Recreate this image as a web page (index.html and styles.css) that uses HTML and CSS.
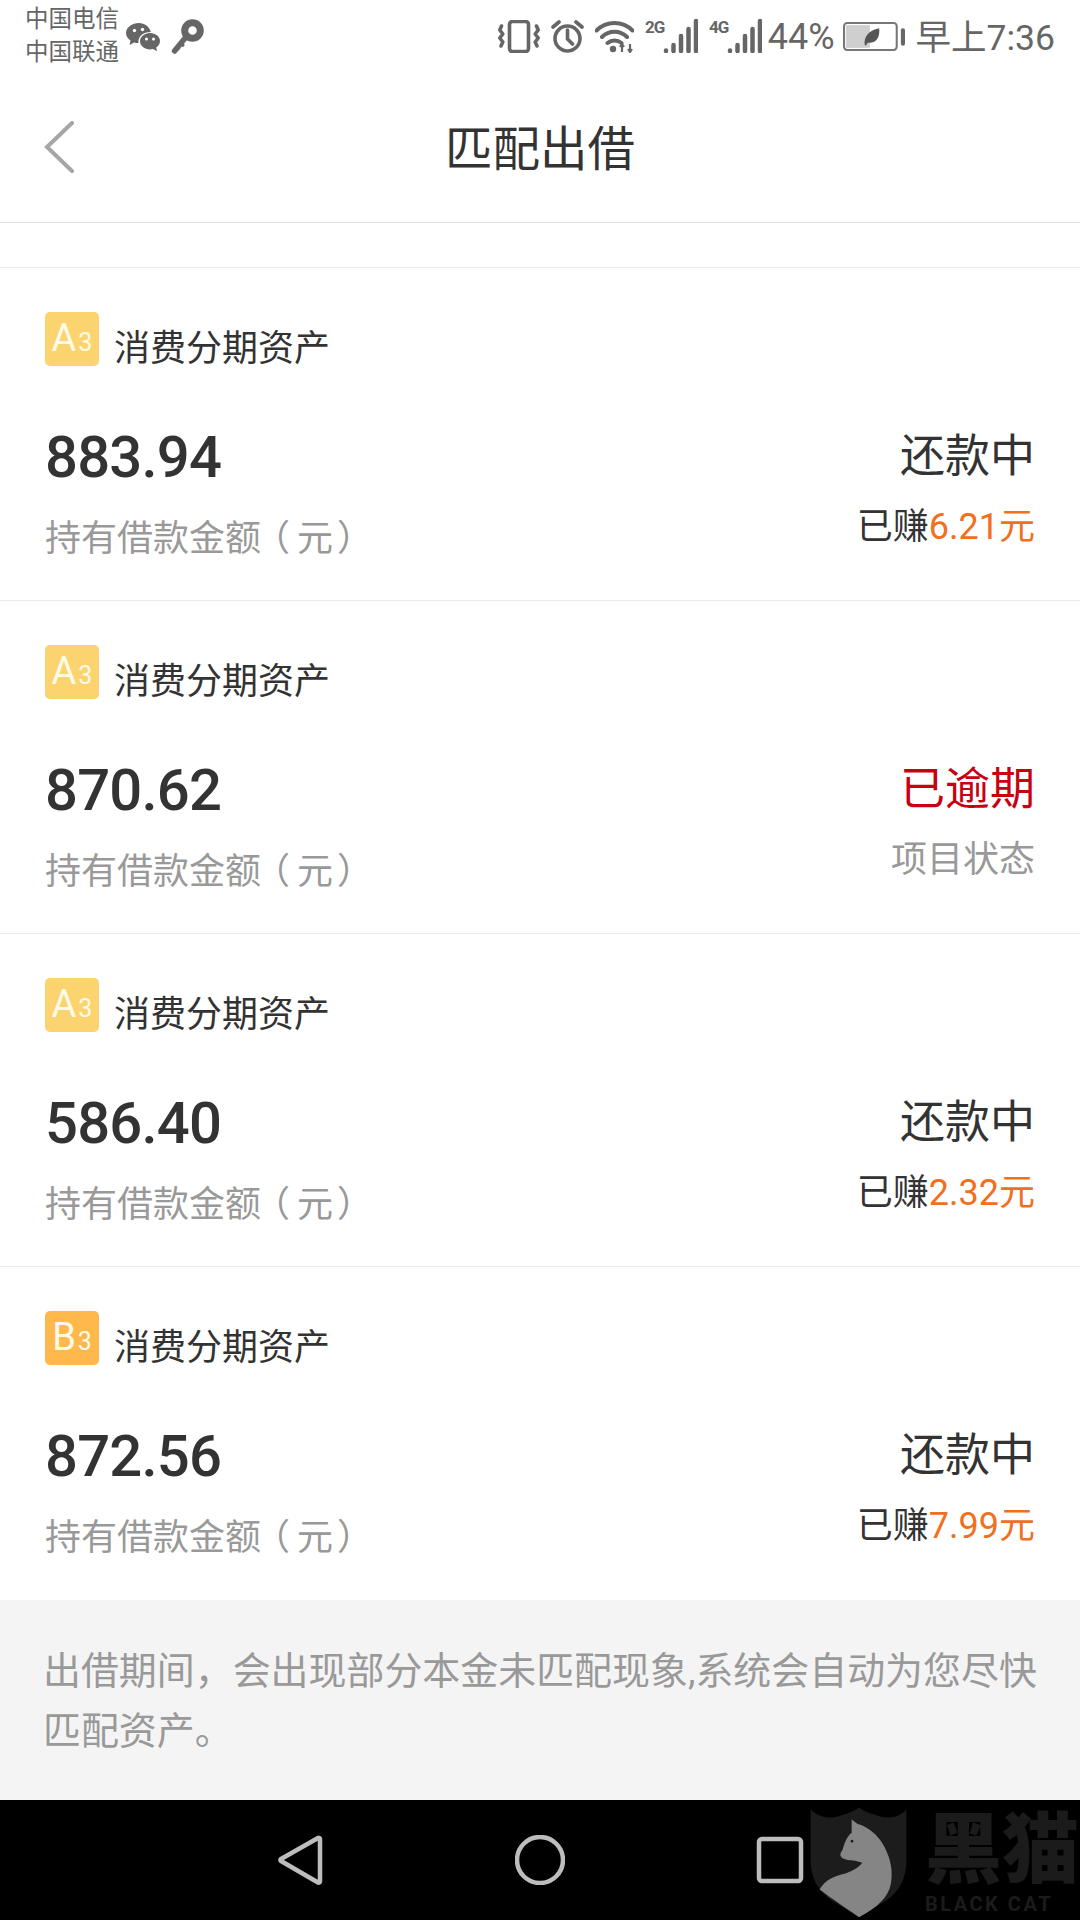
FILE: index.html
```html
<!DOCTYPE html>
<html lang="zh-CN">
<head>
<meta charset="utf-8">
<title>匹配出借</title>
<link rel="stylesheet" href="styles.css">
</head>
<body>
<div class="page">
  <div class="statusbar">
    <div class="carriers"><span>中国电信</span><span>中国联通</span></div>
    <svg class="ic-wechat" viewBox="0 0 34 30"><path d="M13 1C6 1 0 5.500 0 11c0 3.200 1.800 5.800 4.500 7.600L3.600 23l4.600-2.600c1.300.4 2.700.6 4.200.6C12 14 17 10 24.800 9.900 23.400 4.800 18.600 1 13 1z"/><path d="M24 11c-5.500 0-10 3.700-10 8.200S18.500 27.400 24 27.400c1.100 0 2.200-.2 3.200-.5l3.800 2.300-.8-3.800c2.300-1.500 3.800-3.800 3.800-6.500C34 14.700 29.500 11 24 11z"/><g class="hole"><circle cx="8.500" cy="8.500" r="1.700"/><circle cx="16.500" cy="7.500" r="1.700"/><circle cx="20.500" cy="17" r="1.500"/><circle cx="27.500" cy="17" r="1.500"/></g></svg>
    <svg class="ic-key" viewBox="0 0 33 36"><circle class="key-head" cx="21.500" cy="11.500" r="7.800"/><path class="key-shaft" d="M15 18 3.500 32"/><path class="key-tooth" d="M9 24l4 3M5.500 28l3 2.500"/></svg>
    <div class="status-right">
      <svg class="ic-vib" viewBox="0 0 42 33"><rect x="11.500" y="1.500" width="19" height="30" rx="3"/><path d="M3.500 6 1.800 10l3 4-3 4 3 4-1.800 4M38.500 6l1.700 4-3 4 3 4-3 4 1.800 4"/></svg>
      <svg class="ic-alarm" viewBox="0 0 33 33"><circle cx="16.500" cy="18.500" r="12.500"/><path d="M16.500 10v9l5 5M2 7l6-5M31 7l-6-5"/></svg>
      <svg class="ic-wifi" viewBox="0 0 39 33"><path d="M1.500 10.500c10-10 26-10 36 0M7 17c7-7 18-7 25 0M12.500 23c4-3.500 10-3.500 14 0"/><circle class="solid" cx="18" cy="29" r="3.200"/><path class="thin" d="M27 32V24M35 32V24M25 27l2-3 2 3M33 29l2 3 2-3"/></svg>
      <svg class="ic-signal" viewBox="0 -4 53 37"><text x="0" y="13">2G</text><path d="M21 31v-.5M28.500 31v-6M36 31V16M43.500 31V9M51 31V1"/></svg>
      <svg class="ic-signal" viewBox="0 -4 53 37"><text x="0" y="13">4G</text><path d="M21 31v-.5M28.500 31v-6M36 31V16M43.500 31V9M51 31V1"/></svg>
      <span class="pct">44%</span>
      <svg class="ic-batt" viewBox="0 0 60 28"><rect class="fill" x="3" y="3" width="23" height="22"/><rect class="frame" x="1" y="1" width="51" height="26" rx="3"/><path class="nub" d="M58 8v13"/><path class="leaf" d="M21 22c-1-8 4-14 14-16 1 9-3 15-11 14l-2 3z"/></svg>
      <span class="clock">早上7:36</span>
    </div>
  </div>

  <header class="topbar">
    <svg class="back" viewBox="0 0 32 56"><path d="M29 2 4 26l25 24"/></svg>
    <h1 class="title">匹配出借</h1>
  </header>

  <div class="list">
    <section class="item">
      <div class="head"><span class="badge badge-a">A<small>3</small></span><span class="name">消费分期资产</span></div>
      <div class="body">
        <div class="left"><div class="amount">883.94</div><div class="label">持有借款金<span class="tight">额</span><span class="lp">（</span><span class="unit">元</span>）</div></div>
        <div class="right"><div class="state">还款中</div><div class="sub">已赚<em>6.21元</em></div></div>
      </div>
    </section>
    <section class="item">
      <div class="head"><span class="badge badge-a">A<small>3</small></span><span class="name">消费分期资产</span></div>
      <div class="body">
        <div class="left"><div class="amount">870.62</div><div class="label">持有借款金<span class="tight">额</span><span class="lp">（</span><span class="unit">元</span>）</div></div>
        <div class="right"><div class="state overdue">已逾期</div><div class="sub muted">项目状态</div></div>
      </div>
    </section>
    <section class="item">
      <div class="head"><span class="badge badge-a">A<small>3</small></span><span class="name">消费分期资产</span></div>
      <div class="body">
        <div class="left"><div class="amount">586.40</div><div class="label">持有借款金<span class="tight">额</span><span class="lp">（</span><span class="unit">元</span>）</div></div>
        <div class="right"><div class="state">还款中</div><div class="sub">已赚<em>2.32元</em></div></div>
      </div>
    </section>
    <section class="item">
      <div class="head"><span class="badge badge-b">B<small>3</small></span><span class="name">消费分期资产</span></div>
      <div class="body">
        <div class="left"><div class="amount">872.56</div><div class="label">持有借款金<span class="tight">额</span><span class="lp">（</span><span class="unit">元</span>）</div></div>
        <div class="right"><div class="state">还款中</div><div class="sub">已赚<em>7.99元</em></div></div>
      </div>
    </section>
  </div>

  <footer class="note">出借期间，会出现部分本金未匹配现象,系统会自动为您尽快匹配资产。</footer>

  <nav class="navbar">
    <svg class="nav-ic" viewBox="0 0 50 50"><path d="M43 3 6 24c-.8.500-.8 1.500 0 2l37 21.500c1 .5 2 0 2-1V4c0-1-1-1.500-2-1z"/></svg>
    <svg class="nav-ic" viewBox="0 0 50 50"><circle cx="25" cy="25" r="23"/></svg>
    <svg class="nav-ic" viewBox="0 0 50 50"><rect x="4" y="4" width="42" height="42" rx="3"/></svg>
    <div class="watermark">
      <svg class="shield" viewBox="60 15 300 335"><path class="sh" d="M65 25c25 25 60 30 90 18 25-8 45-15 55-25 10 10 30 17 55 25 30 12 65 7 87-18v155c0 50-20 90-60 118l-82 50-82-50c-40-28-63-68-63-118z"/><path class="cat" d="M188 55l17 13c30 8 62 32 82 70 18 36 26 72 18 112-6 36-40 70-95 98-30-22-78-52-118-83 12-22 32-36 58-43 26-6 50-14 70-37l-22-6c-14-2-30-2-40-10-6-6-5-14 2-22 6-16 10-38 28-52z"/><circle class="eye" cx="189" cy="120" r="4"/></svg>
      <div class="brand"><span class="cn">黑猫</span><span class="en">BLACK CAT</span></div>
    </div>
  </nav>
</div>
</body>
</html>
```

FILE: styles.css
```css
* { box-sizing: border-box; }
html, body { margin: 0; padding: 0; background: #fff; }
body { font-family: Roboto, "Noto Sans CJK SC", sans-serif; color: #333; }
.page { width: 1080px; height: 1920px; display: flex; flex-direction: column; overflow: hidden; }

/* status bar */
.statusbar { height: 74px; display: flex; align-items: flex-start; padding: 0 25px 0 25px; color: #666; }
.carriers { display: flex; flex-direction: column; font-size: 23.500px; line-height: 33px; margin-top: 3px; white-space: nowrap; }
.ic-wechat { width: 34px; height: 30px; margin: 22px 0 0 7px; fill: #666; }
.ic-wechat .hole { fill: #fff; }
.ic-key { width: 33px; height: 36px; margin: 19px 0 0 11px; }
.key-head { fill: none; stroke: #666; stroke-width: 7; }
.key-shaft { fill: none; stroke: #666; stroke-width: 5.500; stroke-linecap: round; }
.key-tooth { fill: none; stroke: #666; stroke-width: 3; }
.status-right { margin-left: auto; display: flex; align-items: center; gap: 11px; height: 33px; margin-top: 20px; }
.status-right svg { display: block; flex: none; }
.ic-vib { width: 42px; height: 33px; fill: none; stroke: #666; stroke-width: 3.600; stroke-linecap: round; stroke-linejoin: round; }
.ic-alarm { width: 33px; height: 33px; fill: none; stroke: #666; stroke-width: 3.600; stroke-linecap: round; stroke-linejoin: round; }
.ic-wifi { width: 39px; height: 33px; fill: none; stroke: #666; stroke-width: 4; stroke-linecap: round; }
.ic-wifi .solid { fill: #666; stroke: none; }
.ic-wifi .thin { stroke-width: 2.200; stroke-linecap: butt; }
.ic-signal { width: 53px; height: 37px; margin-top: -4px; fill: none; stroke: #666; stroke-width: 4.500; stroke-linecap: round; }
.ic-signal text { fill: #666; stroke: none; font-family: Roboto, sans-serif; font-weight: 700; font-size: 17px; letter-spacing: -1px; }
.pct { font-size: 36px; line-height: 33px; margin: 2px 0 0 -5px; }
.ic-batt { width: 62px; height: 29px; margin-left: -3px; }
.ic-batt .fill { fill: #cfcfcf; }
.ic-batt .frame { fill: none; stroke: #777; stroke-width: 2; }
.ic-batt .nub { fill: none; stroke: #666; stroke-width: 4; stroke-linecap: round; }
.ic-batt .leaf { fill: #555; }
.clock { font-size: 35.500px; line-height: 33px; margin-top: 4px; white-space: nowrap; }

/* top bar */
.topbar { height: 149px; flex: none; position: relative; display: flex; align-items: center; justify-content: center; padding-bottom: 6px; border-bottom: 1px solid #e0e0e0; }
.back { position: absolute; left: 43px; top: 47px; width: 32px; height: 56px; fill: none; stroke: #a6a6a6; stroke-width: 4; stroke-linecap: round; stroke-linejoin: miter; }
.title { margin: 0; font-size: 47.500px; font-weight: 400; color: #333; }

/* list */
.list { margin-top: 44px; border-top: 1px solid #eaeaea; flex: none; }
.item { height: 333px; padding: 44px 45px 0; border-bottom: 1px solid #eaeaea; }
.item:last-child { border-bottom: 0; }
.head { display: flex; align-items: flex-start; }
.badge { width: 54px; height: 54px; border-radius: 5px; color: #fffbe9; font-size: 38px; font-weight: 400; line-height: 52px; display: flex; justify-content: center; align-items: baseline; }
.badge small { font-size: 25px; margin-left: 2px; }
.badge-a { background: #fbd36f; }
.badge-b { background: #ffb84c; }
.name { font-size: 36px; line-height: 44px; margin: 15px 0 0 15px; color: #333; }
.body { display: flex; justify-content: space-between; align-items: flex-start; }
.amount { font-size: 58px; font-weight: 500; line-height: 60px; margin-top: 56px; color: #333; letter-spacing: -0.8px; }
.label { font-size: 36px; line-height: 40px; margin-top: 32px; color: #999; }
.tight { letter-spacing: -7px; }
.lp { letter-spacing: 7px; }
.unit { letter-spacing: 4px; }
.right { text-align: right; }
.state { font-size: 45px; line-height: 50px; margin-top: 61px; color: #333; }
.overdue { color: #c8000f; }
.sub { font-size: 36px; line-height: 40px; margin-top: 25px; color: #333; }
.sub em { font-style: normal; color: #f0701e; }
.muted { color: #999; }

/* note */
.note { height: 200px; flex: none; background: #f4f4f4; padding: 41px 36px 0 43px; font-size: 37.950px; line-height: 60px; color: #999; }

/* nav */
.navbar { height: 120px; flex: none; background: #000; position: relative; display: flex; justify-content: center; align-items: center; gap: 190px; }
.nav-ic { width: 50px; height: 50px; fill: none; stroke: #bdbdbd; stroke-width: 4.500; stroke-linejoin: round; }
.watermark { position: absolute; left: 809px; top: 6px; display: flex; gap: 16px; }
.shield { width: 100px; height: 112px; }
.sh { fill: #1c1c1c; }
.cat { fill: #858585; }
.eye { fill: #1c1c1c; }
.brand { display: flex; flex-direction: column; color: #1b1b1b; }
.cn { font-size: 77px; font-weight: 900; line-height: 88px; font-family: "Liberation Sans", "Noto Sans CJK SC", sans-serif; white-space: nowrap; }
.en { font-size: 20px; font-weight: 700; line-height: 20px; letter-spacing: 2.500px; white-space: nowrap; }
```
